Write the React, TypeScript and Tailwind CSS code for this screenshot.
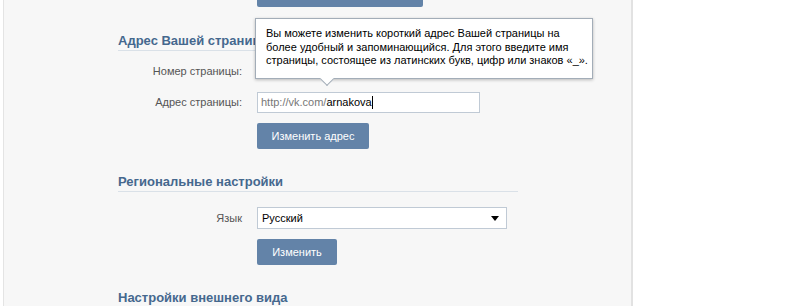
import React from 'react';

const font = "font-['Liberation_Sans',Arial,sans-serif]";

interface SectionTitleProps {
  title: string;
  className?: string;
}

const SectionTitle: React.FC<SectionTitleProps> = ({ title, className = '' }) => (
  <div className={`w-[400px] border-b border-[#dae1e8] pb-[1px] ${className}`}>
    <h2 className="text-[13px] leading-[16px] font-bold text-[#45688e]">{title}</h2>
  </div>
);

interface RowProps {
  label: string;
  children?: React.ReactNode;
  className?: string;
}

const Row: React.FC<RowProps> = ({ label, children, className = '' }) => (
  <div className={`flex items-center ${className}`}>
    <div className="w-[139px] pr-[15px] text-right text-[11px] text-[#555]">{label}</div>
    {children}
  </div>
);

const Button: React.FC<{ label?: string; width: string; className?: string }> = ({ label, width, className = '' }) => (
  <div className="flex">
    <div className="w-[139px] shrink-0" />
    <button
      className={`${width} h-[26px] rounded-[2px] bg-[#6383a8] text-[11px] text-white ${className}`}
    >
      {label}
    </button>
  </div>
);

const App: React.FC = () => {
  return (
    <div className={`w-[800px] h-[306px] overflow-hidden bg-white flex ${font}`}>
      <div className="ml-[3px] w-[630px] h-full bg-[#f7f7f7] border-l border-[#e4e4e4] border-r-2 border-r-[#e2e2e2] relative">
        <div className="pl-[114px]">
          <Button width="w-[166px]" className="-mt-[19px]" />

          <SectionTitle title="Адрес Вашей страницы" className="mt-[26px]" />
          <Row label="Номер страницы:" className="mt-[10px] h-[21px]" />
          <Row label="Адрес страницы:" className="mt-[10px]">
            <div className="w-[223px] h-[21px] border border-[#c0cad5] bg-white px-[3px] flex items-center text-[11px]">
              <span className="text-[#777]">http://vk.com/</span>
              <span className="text-black">arnakova</span>
              <span className="w-px h-[13px] bg-black" />
            </div>
          </Row>
          <Button label="Изменить адрес" width="w-[112px]" className="mt-[10px]" />

          <SectionTitle title="Региональные настройки" className="mt-[25px]" />
          <Row label="Язык" className="mt-[15px]">
            <div className="w-[250px] h-[22px] border border-[#c0cad5] bg-white pl-[4px] pr-[7px] flex items-center justify-between text-[11px] text-black">
              <span>Русский</span>
              <svg width="8" height="5" viewBox="0 0 8 5">
                <path d="M0 0 L8 0 L4 5 Z" fill="#000" />
              </svg>
            </div>
          </Row>
          <Button label="Изменить" width="w-[80px]" className="mt-[10px]" />

          <SectionTitle title="Настройки внешнего вида" className="mt-[25px]" />
        </div>

        <div className="absolute left-[251px] top-[18px] w-[338px] h-[61px] bg-white border border-[#a3adb8] shadow-[0_1px_3px_rgba(0,0,0,0.25)] pl-[10px] pt-[8px] text-[11px] leading-[13.5px] text-black">
          Вы можете изменить короткий адрес Вашей страницы на
          <br />
          более удобный и запоминающийся. Для этого введите имя
          <br />
          страницы, состоящее из латинских букв, цифр или знаков «_».
          <div className="absolute left-[66px] -bottom-[6px] w-[10px] h-[10px] bg-white border-r border-b border-[#a3adb8] rotate-45" />
        </div>
      </div>
    </div>
  );
};

export default App;
